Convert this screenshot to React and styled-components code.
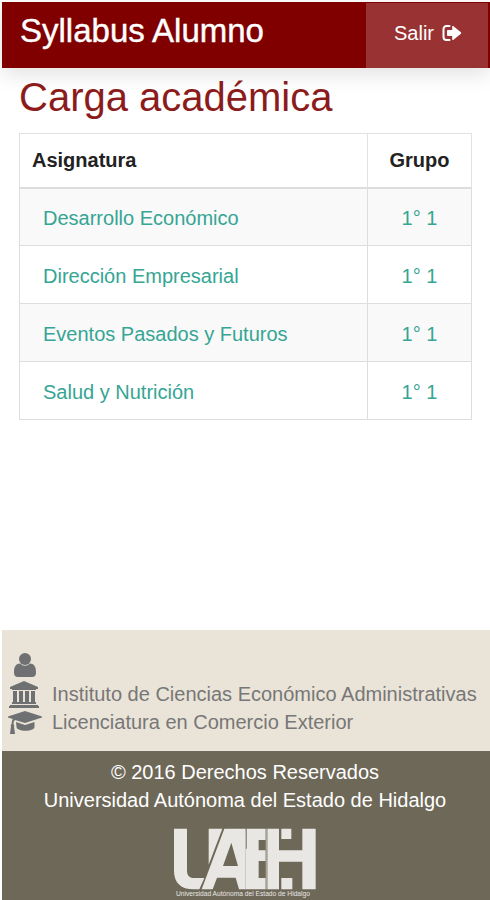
import React from "react";
import styled, { createGlobalStyle } from "styled-components";

const GlobalStyle = createGlobalStyle`
  *, *::before, *::after { box-sizing: border-box; }
  body {
    margin: 0;
    background: #fff;
    font-family: "Liberation Sans", Arial, sans-serif;
    font-size: 20px;
    line-height: 28px;
    color: #222;
  }
`;

const Page = styled.div`
  display: flex;
  flex-direction: column;
  min-height: 100vh;
  padding: 2px 0 0 2px;
`;

const Header = styled.header`
  display: flex;
  justify-content: space-between;
  height: 66px;
  background: #800000;
  border-top: 1px solid #800000;
  border-right: 2px solid #800000;
  box-shadow: 0 6px 20px rgba(0, 0, 0, 0.12);
  color: #fff;
`;

const Brand = styled.span`
  padding-left: 18px;
  font-size: 33px;
  line-height: 56px;
  -webkit-text-stroke: 0.4px #fff;
`;

const ExitButton = styled.button`
  display: flex;
  align-items: center;
  justify-content: center;
  gap: 8px;
  width: 122px;
  padding: 0 0 6px 2px;
  border: 0;
  background: #993333;
  color: #fff;
  font: inherit;
  cursor: pointer;
`;

const Main = styled.main`
  flex: 1;
  padding: 5px 18px 24px 17px;
`;

const Title = styled.h1`
  margin: 0 0 12px;
  color: #8c1c1c;
  font-size: 40px;
  font-weight: 400;
  line-height: 48px;
`;

const Table = styled.table`
  width: 100%;
  border-collapse: collapse;
  border: 1px solid #ddd;
`;

const HeadCell = styled.th`
  height: 54px;
  padding: 0 12px;
  border: 1px solid #e2e2e2;
  border-bottom: 2px solid #ddd;
  width: ${({ $narrow }) => ($narrow ? "104px" : "auto")};
  text-align: ${({ $narrow }) => ($narrow ? "center" : "left")};
`;

const Row = styled.tr`
  &:nth-child(odd) { background: #f9f9f9; }
`;

const Cell = styled.td`
  height: 58px;
  padding: 3px ${({ $center }) => ($center ? "12px" : "23px")} 0;
  border: 1px solid #ddd;
  text-align: ${({ $center }) => ($center ? "center" : "left")};
`;

const CourseLink = styled.a`
  color: #35a594;
  text-decoration: none;
`;

const Profile = styled.section`
  padding: 22px 6px 15px;
  background: #eae3d7;
`;

const ProfileList = styled.ul`
  margin: 0;
  padding: 0;
  list-style: none;
`;

const ProfileItem = styled.li`
  display: flex;
  align-items: center;
  gap: 10px;
  height: 28px;
  color: #777;

  svg { flex: none; color: #6f7072; }
`;

const Legal = styled.footer`
  display: flex;
  flex-direction: column;
  align-items: center;
  padding: 7px 2px 2px 0;
  background: #6e6858;
  color: #fff;
  text-align: center;

  p { margin: 0; }
  svg { display: block; margin-top: 14px; }
`;

const SignOutIcon = () => (
  <svg width="20" height="18" viewBox="0 0 20 18" fill="currentColor" aria-hidden="true">
    <path d="M7.500 2H4.500A3 3 0 0 0 1.500 5V13A3 3 0 0 0 4.500 16H7.500" fill="none" stroke="currentColor" strokeWidth="2" strokeLinecap="round" />
    <path d="M11.200 2.100 18.900 8.300Q19.600 9 18.900 9.700L11.200 15.900Q10.200 16.500 10.200 15.300V12H6Q5 12 5 11V7Q5 6 6 6H10.200V2.700Q10.200 1.500 11.200 2.100Z" />
  </svg>
);

const UserIcon = () => (
  <svg width="34" height="28" viewBox="0 0 34 28" fill="currentColor" aria-hidden="true">
    <circle cx="17" cy="7" r="6" />
    <path d="M12 11.500Q17 16 22 11.500C26.500 12 28 15 28 20.500Q28 25 24 25H10Q6 25 6 20.500C6 15 7.500 12 12 11.500Z" />
  </svg>
);

const InstituteIcon = () => (
  <svg width="34" height="28" viewBox="0 0 34 28" fill="currentColor" aria-hidden="true">
    <path d="M16 1 30 7V9H28V10H4V9H2V7ZM5 11H9V22H11V11H15V22H17V11H21V22H23V11H27V22H28V24H4V22H5ZM2 25H30V26H31V28H1V26H2Z" />
  </svg>
);

const DegreeIcon = () => (
  <svg width="34" height="28" viewBox="0 0 34 28" fill="currentColor" aria-hidden="true">
    <path d="M17 3 34 8.500V9.500L17 15 7 12Q5.500 13 5.400 16Q7 17 6 18.500L7 26H2L3 18.500Q2 17 3.500 16Q3.600 13 4.800 11L0 9.500V8.500Z" />
    <path d="M8 14 17 17 26.500 14V19C26 24 9 24 8.500 19Z" />
  </svg>
);

const UniversityLogo = () => (
  <svg width="144" height="70" viewBox="40 38 432 210" fill="#e9e7e3" role="img" aria-label="UAEH">
    <path d="M43 40H82V166C82 182 92 188 104 188H134L119 222H102C64 222 43 202 43 166Z" />
    <path d="M147 40H188L147 148Z" />
    <path fillRule="evenodd" d="M194 40H258V222H238L228 187H172L159 222H126ZM215 82 190 152H235Z" />
    <path d="M261 40H318V74H297V105H318V137H297V188H318V222H258V100H261Z" />
    <path d="M323 40H358V105H428V40H468V222H428V139H358V222H323ZM365 40H395V71H365ZM365 188H398V222H365Z" />
    <path d="M318 40H323V222H318Z" fill="#a8a499" />
    <path d="M258 40H261V104Z" fill="#969185" />
    <text x="49" y="243" fontFamily="Liberation Sans, Arial, sans-serif" fontSize="20">Universidad Autónoma del Estado de Hidalgo</text>
  </svg>
);

const courses = [
  { name: "Desarrollo Económico", group: "1° 1" },
  { name: "Dirección Empresarial", group: "1° 1" },
  { name: "Eventos Pasados y Futuros", group: "1° 1" },
  { name: "Salud y Nutrición", group: "1° 1" },
];

export default function App() {
  return (
    <Page>
      <GlobalStyle />
      <Header>
        <Brand>Syllabus Alumno</Brand>
        <ExitButton type="button">Salir <SignOutIcon /></ExitButton>
      </Header>
      <Main>
        <Title>Carga académica</Title>
        <Table>
          <thead>
            <tr>
              <HeadCell scope="col">Asignatura</HeadCell>
              <HeadCell scope="col" $narrow>Grupo</HeadCell>
            </tr>
          </thead>
          <tbody>
            {courses.map(({ name, group }) => (
              <Row key={name}>
                <Cell><CourseLink href="#">{name}</CourseLink></Cell>
                <Cell $center><CourseLink href="#">{group}</CourseLink></Cell>
              </Row>
            ))}
          </tbody>
        </Table>
      </Main>
      <Profile>
        <ProfileList>
          <ProfileItem><UserIcon /></ProfileItem>
          <ProfileItem><InstituteIcon />Instituto de Ciencias Económico Administrativas</ProfileItem>
          <ProfileItem><DegreeIcon />Licenciatura en Comercio Exterior</ProfileItem>
        </ProfileList>
      </Profile>
      <Legal>
        <p>© 2016 Derechos Reservados</p>
        <p>Universidad Autónoma del Estado de Hidalgo</p>
        <UniversityLogo />
      </Legal>
    </Page>
  );
}
